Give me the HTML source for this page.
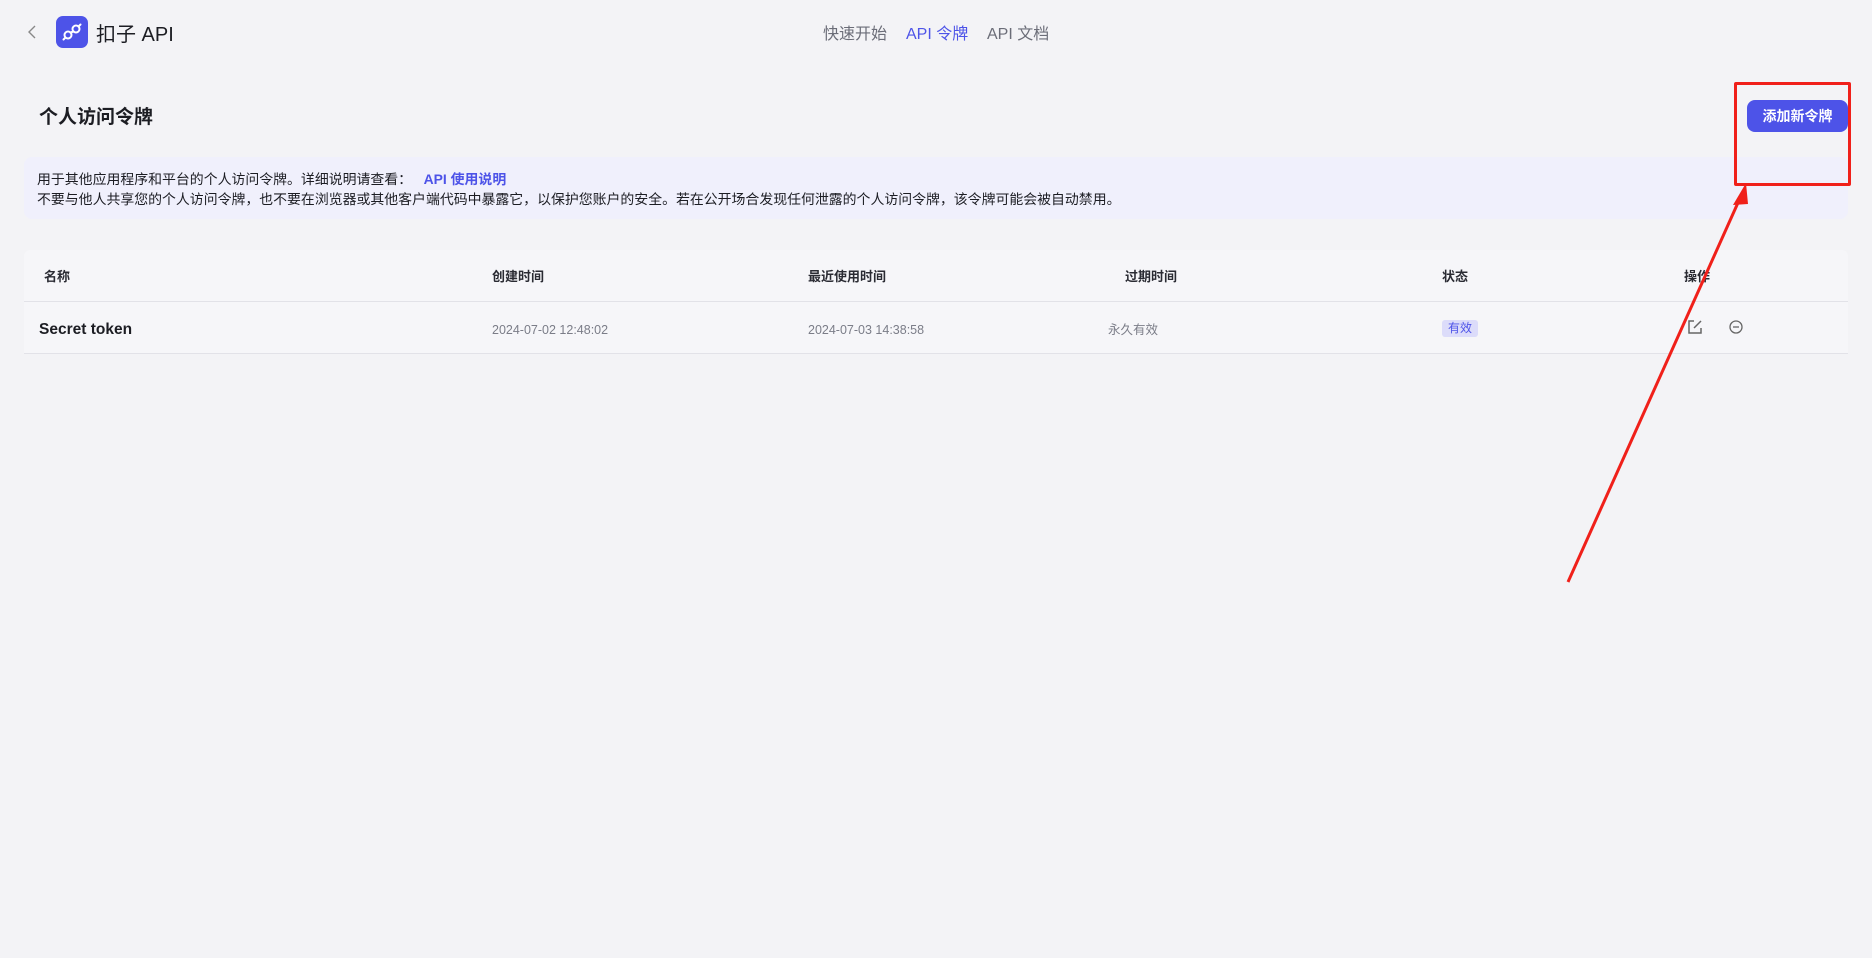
<!DOCTYPE html>
<html><head><meta charset="utf-8"><style>
*{margin:0;padding:0;box-sizing:border-box}
body{width:1872px;height:958px;background:#f3f3f6;font-family:"Liberation Sans","Noto Sans CJK SC",sans-serif;color:#1c1d23;position:relative;overflow:hidden}
.a{position:absolute;white-space:nowrap}
.th{font-size:13px;font-weight:600;color:#2a2b33;top:266px}
.td{font-size:12.5px;color:#7b7d88;top:323px}
</style></head><body>
<svg class="a" style="left:26px;top:24px" width="14" height="16" viewBox="0 0 14 16"><path d="M9 2 L3 8 L9 14" fill="none" stroke="#888" stroke-width="1.4"/></svg>
<div class="a" style="left:56px;top:16px;width:32px;height:32px;border-radius:7px;background:#4d53e8"></div>
<svg class="a" style="left:56px;top:16px" width="32" height="32" viewBox="0 0 32 32"><g fill="none" stroke="#fff" stroke-width="2" stroke-linecap="round"><circle cx="12" cy="19" r="3.5"/><circle cx="20" cy="13" r="3.5"/><path d="M14.5 16.5 L17.5 15.5"/><path d="M9 22 L7.5 23.5"/><path d="M23 10 L24.5 8.5"/></g></svg>
<div class="a" style="left:96px;top:18px;font-size:20px;color:#1c1d23">扣子 API</div>
<div class="a" style="left:823px;top:20px;font-size:16px;color:#6b6d78">快速开始</div>
<div class="a" style="left:906px;top:20px;font-size:16px;color:#4d53e8">API 令牌</div>
<div class="a" style="left:987px;top:20px;font-size:16px;color:#6b6d78">API 文档</div>
<div class="a" style="left:39px;top:102px;font-size:19px;font-weight:700">个人访问令牌</div>
<div class="a" style="left:1747px;top:100px;width:101px;height:32px;border-radius:8px;background:#4d53e8;color:#fff;font-size:14px;font-weight:700;text-align:center;line-height:32px">添加新令牌</div>
<div class="a" style="left:24px;top:157px;width:1824px;height:62px;border-radius:8px;background:#f0f0fc"></div>
<div class="a" style="left:37px;top:169px;font-size:13.9px;color:#1c1d23">用于其他应用程序和平台的个人访问令牌。详细说明请查看：&nbsp;&nbsp;&nbsp;<b style="color:#4d53e8">API 使用说明</b></div>
<div class="a" style="left:37px;top:189px;font-size:13.9px;color:#1c1d23">不要与他人共享您的个人访问令牌，也不要在浏览器或其他客户端代码中暴露它，以保护您账户的安全。若在公开场合发现任何泄露的个人访问令牌，该令牌可能会被自动禁用。</div>
<div class="a" style="left:24px;top:250px;width:1824px;height:103px;background:#f6f6f9;border-radius:6px 6px 0 0"></div>
<div class="a" style="left:24px;top:301px;width:1824px;height:1px;background:#e2e2e8"></div>
<div class="a" style="left:24px;top:353px;width:1824px;height:1px;background:#e2e2e8"></div>
<div class="a th" style="left:44px">名称</div>
<div class="a th" style="left:492px">创建时间</div>
<div class="a th" style="left:808px">最近使用时间</div>
<div class="a th" style="left:1125px">过期时间</div>
<div class="a th" style="left:1442px">状态</div>
<div class="a th" style="left:1684px">操作</div>
<div class="a" style="left:39px;top:321px;font-size:15.5px;font-weight:600">Secret token</div>
<div class="a td" style="left:492px">2024-07-02 12:48:02</div>
<div class="a td" style="left:808px">2024-07-03 14:38:58</div>
<div class="a td" style="left:1108px;top:319px">永久有效</div>
<div class="a" style="left:1442px;top:320px;padding:0 6px;height:17px;line-height:17px;border-radius:3px;background:#dcdcfa;color:#4d53e8;font-size:12px">有效</div>
<svg class="a" style="left:1686px;top:318px" width="18" height="18" viewBox="0 0 18 18"><path d="M8 3 H3 V15 H15 V10" fill="none" stroke="#666" stroke-width="1.5"/><path d="M8 10 L15 3" stroke="#666" stroke-width="1.5"/></svg>
<svg class="a" style="left:1727px;top:318px" width="18" height="18" viewBox="0 0 18 18"><circle cx="9" cy="9" r="6" fill="none" stroke="#666" stroke-width="1.3"/><path d="M6 9 H12" stroke="#666" stroke-width="1.3"/></svg>
<div class="a" style="left:1734px;top:82px;width:117px;height:104px;border:3px solid #f0201a;border-radius:2px"></div>
<svg class="a" style="left:0;top:0" width="1872" height="958"><path d="M1568 582 L1741 196" stroke="#f0201a" stroke-width="3"/><path d="M1746 183 L1733 205 L1748 204 Z" fill="#f0201a"/></svg>
</body></html>
